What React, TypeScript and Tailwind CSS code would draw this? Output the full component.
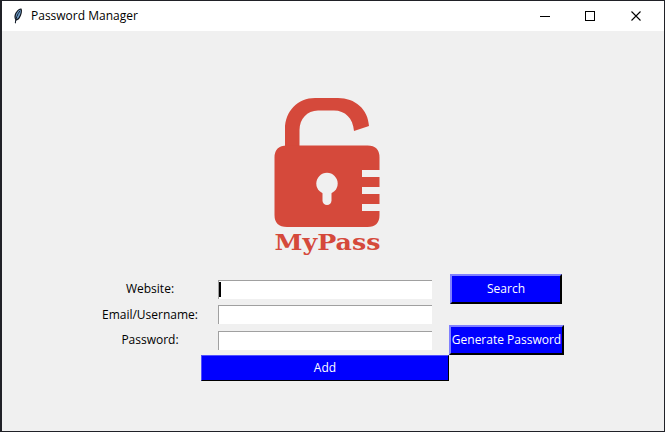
import React from "react";

const FONT = "font-['Open_Sans','Noto_Sans',sans-serif]";

function Feather() {
  return (
    <svg width="10" height="17" viewBox="0 0 10 17" className="block">
      <path d="M2 15.5 L2.6 12 C0.4 9.5 1.6 5.5 4.2 2.6 C5.8 0.9 7.6 0.2 8.6 0.8 C9.6 3 8.6 7 6.9 9.8 C5.9 11.6 4.3 12.6 3.2 12.5 L2.5 15.5 Z" fill="#10151d" />
      <path d="M3 11 C2 8.6 3 5.4 5 3.2 C6 2.1 7 1.7 7.7 1.8 C8.2 3.8 7.4 6.8 5.8 9.2 C5 10.4 4 11.2 3 11 Z" fill="#6f9dc8" />
      <path d="M2.3 15 C2.8 10.5 4.2 6.5 7 2.8" stroke="#121c2b" strokeWidth="1" fill="none" />
    </svg>
  );
}

function TitleBar() {
  return (
    <header className="flex h-[30px] shrink-0 items-center bg-white">
      <div className="w-[29px] pl-[11px]">
        <Feather />
      </div>
      <h1 className="grow text-[12px] leading-4 text-black">Password Manager</h1>
      <svg width="120" height="12" viewBox="0 0 120 12" className="mr-[5px] block" shapeRendering="crispEdges">
        <path d="M1 6.5H11" stroke="#000" />
        <rect x="46.5" y="1.5" width="9" height="9" fill="none" stroke="#000" />
        <path d="M92.5 1.5L101.5 10.5M101.5 1.5L92.5 10.5" stroke="#000" strokeWidth="1.1" shapeRendering="auto" />
      </svg>
    </header>
  );
}

function Logo() {
  return (
    <svg width="110" height="164" viewBox="272 96 110 164" className="block">
      <g fill="#d5493b">
        <path d="M285 150V129C285 111 298 98 315 98H338C355 98 368 109 369 126L354 131C353 118 345 110.500 334 110.500H318C307 110.500 299.500 119 299.500 130V150Z" />
        <path d="M287 145.500H367.500Q379.500 145.500 379.500 157.500V170H362V177H379.500V187H362V194H379.500V204H362V211H379.500V215Q379.500 227 367.500 227H287Q274.500 227 274.500 215V157.500Q274.500 145.500 287 145.500Z" />
        <text x="274.500" y="249.500" fontSize="23" fontWeight="700" textLength="106" lengthAdjust="spacingAndGlyphs" className="font-['DejaVu_Serif',serif]">MyPass</text>
      </g>
      <circle cx="327" cy="183.500" r="10.700" fill="#f0f0f0" />
      <path d="M327 187V200.500" stroke="#f0f0f0" strokeWidth="9" strokeLinecap="round" />
    </svg>
  );
}

function Entry({ label, focused }: { label: string; focused?: boolean }) {
  return (
    <div className="ml-[17px] flex h-[19px] w-[214px] items-center border-l border-t border-[#a0a0a0] bg-white" role="textbox" aria-label={label}>
      {focused && <span className="block h-[15px] w-[2px] bg-black" />}
    </div>
  );
}

function Label({ children }: { children: React.ReactNode }) {
  return <span className="text-center leading-4 whitespace-nowrap text-black">{children}</span>;
}

export default function App() {
  const button = "flex items-center justify-center bg-[#0000ff] whitespace-nowrap text-white";
  const raised = "border-2 border-t-[#8080ff] border-l-[#8080ff] border-r-black border-b-black";
  return (
    <div className={`h-[432px] w-[665px] overflow-hidden bg-[#202127] pt-px pr-px pb-px pl-[2px] text-[12px] ${FONT}`}>
      <div className="flex h-[430px] flex-col bg-[#f0f0f0]">
        <TitleBar />
        <main className="pt-[65px]">
          <div className="pl-[270px]">
            <Logo />
          </div>
          <form className="mt-[14px] ml-[97px] grid grid-cols-[102px_248px_115px] grid-rows-[30px_21px_30px_26px] items-center">
            <Label>Website:</Label>
            <Entry label="Website" focused />
            <button type="button" className={`${button} ${raised} ml-px h-[30px] w-[112px] pb-px`}>Search</button>
            <Label>Email/Username:</Label>
            <Entry label="Email/Username" />
            <span />
            <Label>Password:</Label>
            <Entry label="Password" />
            <button type="button" className={`${button} ${raised} h-[30px] w-[115px] pb-px`}>Generate Password</button>
            <span />
            <button type="button" className={`${button} h-[26px] w-[248px] border border-t-[#5050ff] border-l-[#5050ff] border-r-black border-b-black`}>Add</button>
          </form>
        </main>
      </div>
    </div>
  );
}
